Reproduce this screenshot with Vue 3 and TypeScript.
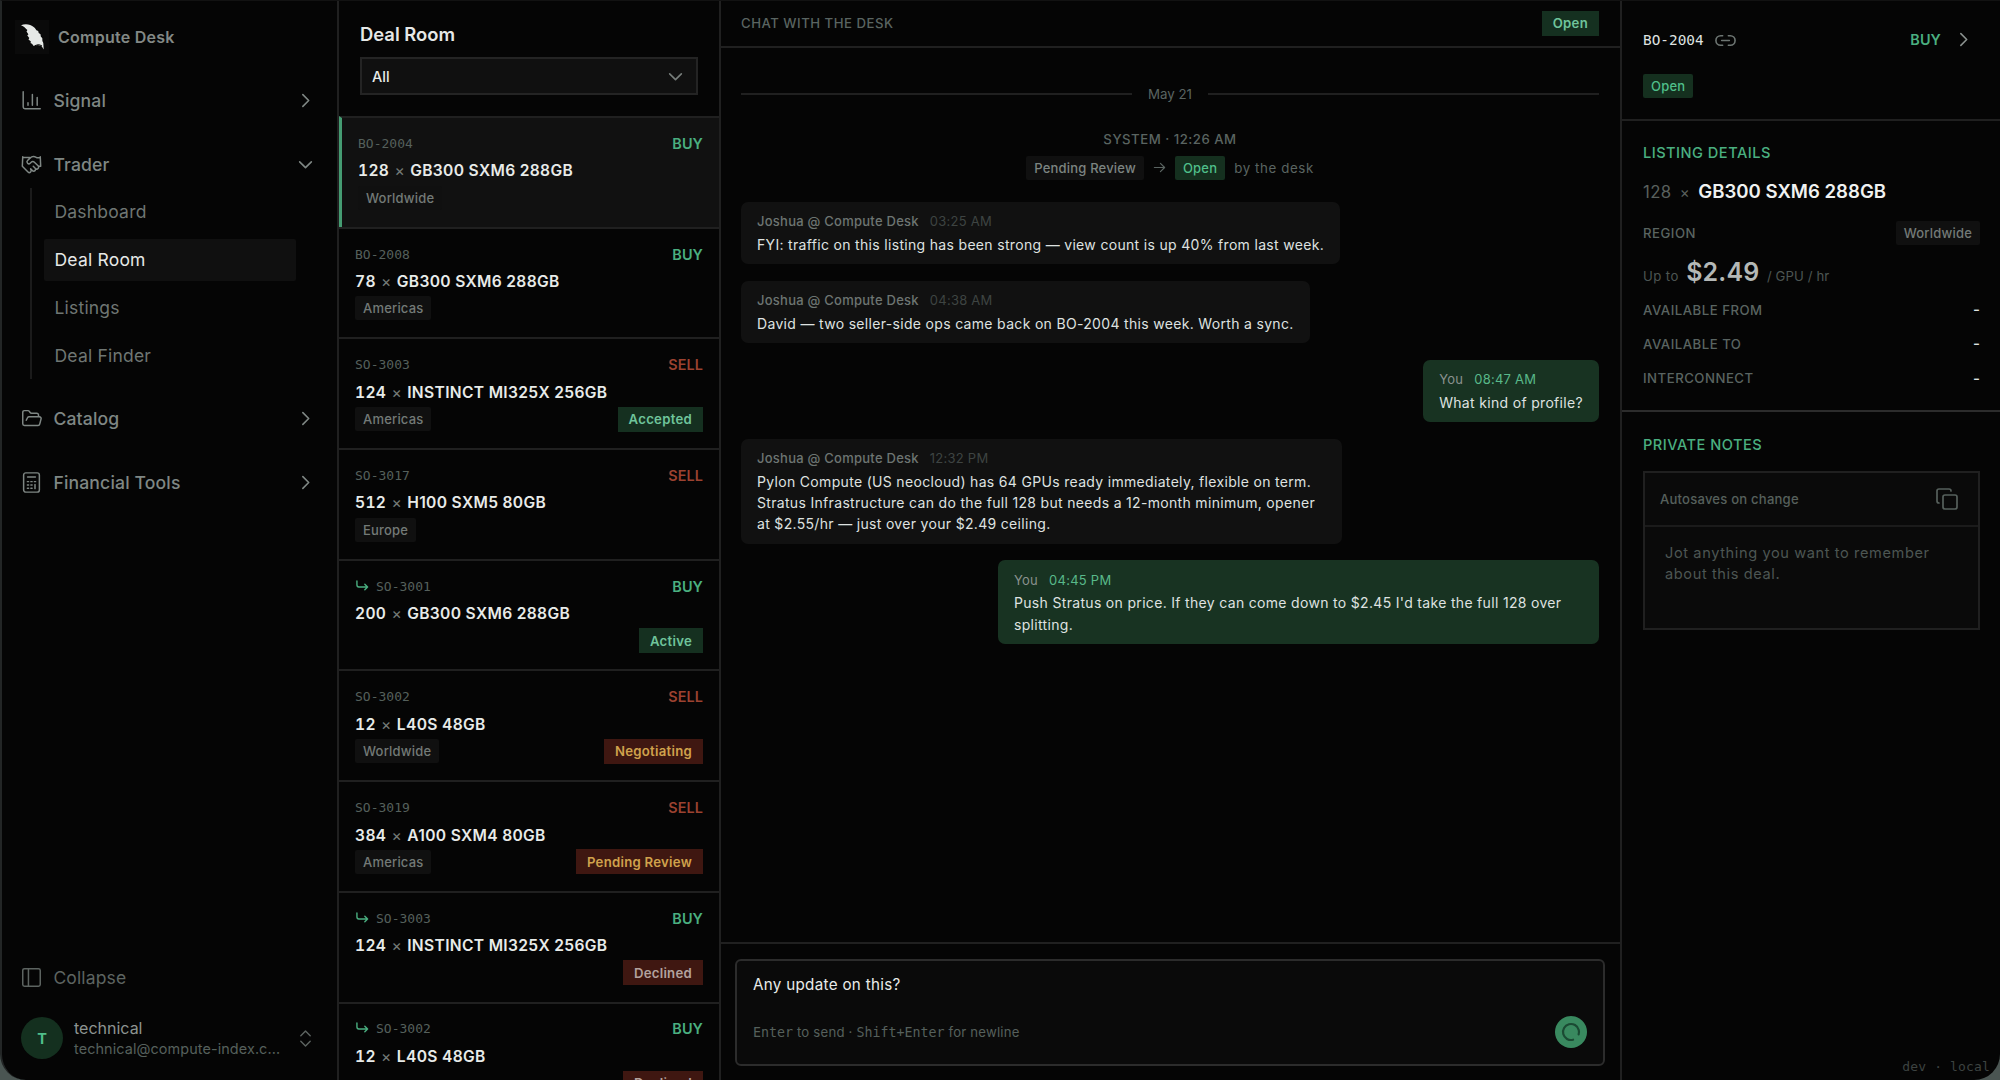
<script setup lang="ts">
interface Deal {
  id: string
  side: 'BUY' | 'SELL'
  qty: string
  name: string
  region?: string
  status?: string
  tone?: 'green' | 'amber' | 'red'
  child?: boolean
  active?: boolean
}

interface Message {
  own: boolean
  author: string
  time: string
  body: string
}

const subItems = ['Dashboard', 'Deal Room', 'Listings', 'Deal Finder']

const deals: Deal[] = [
  { id: 'BO-2004', side: 'BUY', qty: '128', name: 'GB300 SXM6 288GB', region: 'Worldwide', active: true },
  { id: 'BO-2008', side: 'BUY', qty: '78', name: 'GB300 SXM6 288GB', region: 'Americas' },
  { id: 'SO-3003', side: 'SELL', qty: '124', name: 'INSTINCT MI325X 256GB', region: 'Americas', status: 'Accepted', tone: 'green' },
  { id: 'SO-3017', side: 'SELL', qty: '512', name: 'H100 SXM5 80GB', region: 'Europe' },
  { id: 'SO-3001', side: 'BUY', qty: '200', name: 'GB300 SXM6 288GB', status: 'Active', tone: 'green', child: true },
  { id: 'SO-3002', side: 'SELL', qty: '12', name: 'L40S 48GB', region: 'Worldwide', status: 'Negotiating', tone: 'amber' },
  { id: 'SO-3019', side: 'SELL', qty: '384', name: 'A100 SXM4 80GB', region: 'Americas', status: 'Pending Review', tone: 'amber' },
  { id: 'SO-3003', side: 'BUY', qty: '124', name: 'INSTINCT MI325X 256GB', status: 'Declined', tone: 'red', child: true },
  { id: 'SO-3002', side: 'BUY', qty: '12', name: 'L40S 48GB', status: 'Declined', tone: 'red', child: true },
]

const messages: Message[] = [
  { own: false, author: 'Joshua @ Compute Desk', time: '03:25 AM', body: 'FYI: traffic on this listing has been strong — view count is up 40% from last week.' },
  { own: false, author: 'Joshua @ Compute Desk', time: '04:38 AM', body: 'David — two seller-side ops came back on BO-2004 this week. Worth a sync.' },
  { own: true, author: 'You', time: '08:47 AM', body: 'What kind of profile?' },
  { own: false, author: 'Joshua @ Compute Desk', time: '12:32 PM', body: 'Pylon Compute (US neocloud) has 64 GPUs ready immediately, flexible on term. Stratus Infrastructure can do the full 128 but needs a 12-month minimum, opener at $2.55/hr — just over your $2.49 ceiling.' },
  { own: true, author: 'You', time: '04:45 PM', body: "Push Stratus on price. If they can come down to $2.45 I'd take the full 128 over splitting." },
]

const terms = ['Available from', 'Available to', 'Interconnect']
</script>

<template>
  <div class="backdrop">
    <div class="app">
      <nav class="sidebar">
        <div class="brand">
          <span class="brand-mark">
            <svg width="34" height="34" viewBox="0 0 34 34">
              <path d="M6 5.200C10 3.400 15.500 4 19 7.200c1.200 1.100 1.800 1.800 2.400 3l1.800.8.500 2 1.800 1.300.3 2.300 1.500 1.600.1 2.800.9 2 .4 6.500-2-3.200-3.700-1.200-4.300 1-1.700-2.400-1.500-.8.400-1.500-2.400-1.900.8-1.400-2-2.500 1.100-1.300-1.900-2.700.9-1.600C11 8.600 9 6.400 6 5.200Z" fill="#e6e9e7" />
              <path d="M20 25.600l3.500-1 3 1" stroke="#0a0a0a" stroke-width="1" />
            </svg>
          </span>
          <span class="brand-name">Compute Desk</span>
        </div>

        <div class="group">
          <svg class="ico" viewBox="0 0 24 24"><path d="M2.500 2v17.500a2 2 0 0 0 2 2H22M8 14.500v3M13 5v12.500M18.500 8.500v9" /></svg>
          <span>Signal</span>
          <svg class="chev" viewBox="0 0 16 16"><path d="M5.500 2.500 11 8l-5.500 5.500" /></svg>
        </div>
        <div class="group">
          <svg class="ico" viewBox="0 0 24 24"><path d="m11 17 2 2a1 1 0 1 0 3-3M14 14l2.500 2.500a1 1 0 1 0 3-3l-3.880-3.880a3 3 0 0 0-4.240 0l-.88.880a1 1 0 1 1-3-3l2.810-2.810a5.790 5.790 0 0 1 7.060-.870l.470.280a2 2 0 0 0 1.420.250L22 4M22 3l.5 11h-2M2 3l-.5 11L8 20.500a1 1 0 1 0 3-3M2 4h8" /></svg>
          <span>Trader</span>
          <svg class="chev" viewBox="0 0 16 16"><path d="M2.500 5.500 8 11l5.500-5.500" /></svg>
        </div>
        <div class="sub">
          <div v-for="s in subItems" :key="s" class="sub-item" :class="{ on: s === 'Deal Room' }">{{ s }}</div>
        </div>
        <div class="group">
          <svg class="ico" viewBox="0 0 24 24"><path d="m6 14 1.450-2.900A2 2 0 0 1 9.240 10H21a2 2 0 0 1 1.940 2.500l-1.550 6A2 2 0 0 1 19.450 20H4a2 2 0 0 1-2-2V5c0-1.100.9-2 2-2h3.930a2 2 0 0 1 1.660.9l.820 1.200a2 2 0 0 0 1.660.9H18a2 2 0 0 1 2 2v2" /></svg>
          <span>Catalog</span>
          <svg class="chev" viewBox="0 0 16 16"><path d="M5.500 2.500 11 8l-5.500 5.500" /></svg>
        </div>
        <div class="group">
          <svg class="ico" viewBox="0 0 24 24"><rect x="3" y="1" width="18" height="22" rx="2.500" /><path d="M7.500 5.800h9M7.300 11h1.400M11.300 11h1.400M15.300 11h1.400M7.300 14.800h1.400M11.300 14.800h1.400M7.300 18.600h1.400M11.300 18.600h1.400M16 14.300v4.700" /></svg>
          <span>Financial Tools</span>
          <svg class="chev" viewBox="0 0 16 16"><path d="M5.500 2.500 11 8l-5.500 5.500" /></svg>
        </div>

        <div class="side-foot">
          <div class="collapse">
            <svg class="ico" viewBox="0 0 24 24"><rect x="2" y="2" width="20" height="20" rx="2" /><path d="M8.500 2v20" /></svg>
            <span>Collapse</span>
          </div>
          <div class="user">
            <span class="avatar">T</span>
            <div class="who">
              <div class="uname">technical</div>
              <div class="mail">technical@compute-index.c...</div>
            </div>
            <svg class="updown" viewBox="0 0 16 20"><path d="M3 7 8 2l5 5M3 13l5 5 5-5" /></svg>
          </div>
        </div>
      </nav>

      <section class="deals">
        <header class="deals-head">
          <h1>Deal Room</h1>
          <div class="select">
            <span>All</span>
            <svg class="chev" viewBox="0 0 16 16"><path d="M2.500 5.500 8 11l5.500-5.500" /></svg>
          </div>
        </header>
        <article v-for="(d, i) in deals" :key="i" class="deal" :class="{ active: d.active }">
          <div class="deal-top">
            <svg v-if="d.child" class="reply" viewBox="0 0 14 14"><path d="M1 1v4.500a2 2 0 0 0 2 2h9.500M9.500 4.500l3 3-3 3" /></svg>
            <span class="deal-id">{{ d.id }}</span>
            <span class="side" :class="d.side.toLowerCase()">{{ d.side }}</span>
          </div>
          <div class="deal-name"><span class="qty">{{ d.qty }}</span> <i>×</i> {{ d.name }}</div>
          <div class="deal-tags">
            <span v-if="d.region" class="tag">{{ d.region }}</span>
            <span v-if="d.status" class="badge" :class="d.tone">{{ d.status }}</span>
          </div>
        </article>
      </section>

      <main class="chat">
        <header class="chat-head">
          <span class="caps">Chat with the desk</span>
          <span class="badge green">Open</span>
        </header>
        <div class="thread">
          <div class="day"><span>May 21</span></div>
          <div class="system">
            <div class="caps sys-time">System · 12:26 AM</div>
            <div class="sys-line">
              <span class="tag strong">Pending Review</span>
              <svg class="arrow" viewBox="0 0 14 14"><path d="M1.500 7h11M8 2.500 12.500 7 8 11.500" /></svg>
              <span class="tag open">Open</span>
              <span class="by">by the desk</span>
            </div>
          </div>
          <div v-for="m in messages" :key="m.time" class="msg" :class="{ own: m.own }">
            <div class="meta"><b>{{ m.author }}</b><time>{{ m.time }}</time></div>
            <p>{{ m.body }}</p>
          </div>
        </div>
        <footer class="composer">
          <div class="box">
            <div class="draft">Any update on this?</div>
            <div class="hint">
              <span><kbd>Enter</kbd> to send · <kbd>Shift+Enter</kbd> for newline</span>
              <span class="send"><svg viewBox="0 0 32 32"><circle cx="16" cy="16" r="8" stroke="#1b4a33" stroke-width="2.200" stroke-dasharray="42 9" transform="rotate(75 16 16)" /></svg></span>
            </div>
          </div>
        </footer>
      </main>

      <aside class="panel">
        <header class="panel-head">
          <div class="panel-row">
            <span class="panel-id">BO-2004</span>
            <svg class="link" viewBox="0 0 24 24"><path d="M9 17H7A5 5 0 0 1 7 7h2M15 7h2a5 5 0 1 1 0 10h-2M8 12h8" /></svg>
            <span class="side buy">BUY</span>
            <svg class="chev" viewBox="0 0 16 16"><path d="M5.500 2.500 11 8l-5.500 5.500" /></svg>
          </div>
          <span class="tag open">Open</span>
        </header>
        <section class="details">
          <h2>Listing details</h2>
          <div class="gpu"><span class="q">128</span><span class="x">×</span><span>GB300 SXM6 288GB</span></div>
          <div class="kv region"><span class="caps">Region</span><span class="tag">Worldwide</span></div>
          <div class="price"><span>Up to</span><strong>$2.49</strong><span>/ GPU / hr</span></div>
          <div v-for="t in terms" :key="t" class="kv"><span class="caps">{{ t }}</span><b>-</b></div>
        </section>
        <section class="notes">
          <h2>Private notes</h2>
          <div class="note-box">
            <div class="note-head">
              <span>Autosaves on change</span>
              <svg viewBox="0 0 24 24"><rect x="8" y="8" width="14" height="14" rx="2" /><path d="M4 16c-1.100 0-2-.9-2-2V4c0-1.100.9-2 2-2h10c1.100 0 2 .9 2 2" /></svg>
            </div>
            <div class="note-body">Jot anything you want to remember about this deal.</div>
          </div>
        </section>
        <div class="env">dev · local</div>
      </aside>
    </div>
  </div>
</template>

<style>
body { background: #4a5552; }
</style>

<style scoped>
* { box-sizing: border-box; }
.backdrop { width: 2000px; height: 1080px; overflow: hidden; background: #4a5552; font-family: Inter, sans-serif; color: #e8ebe9; }
.app { width: 2000px; height: 1080px; display: flex; background: #050505; border-left: 2px solid #232626; border-top: 1px solid #121212; border-radius: 0 0 26px 26px; overflow: hidden; }
svg { fill: none; stroke: currentColor; stroke-linecap: round; stroke-linejoin: round; flex: none; }
h1, h2, p { margin: 0; font-weight: 600; }

.sidebar { width: 337px; flex: none; border-right: 2px solid #202020; display: flex; flex-direction: column; padding: 18px 0 0; color: #7c8481; }
.brand { display: flex; align-items: center; height: 36px; padding-left: 13px; gap: 9px; margin-bottom: 14px; }
.brand-mark { width: 34px; height: 34px; background: #0a0a0a; display: flex; }
.brand-mark svg { stroke: none; }
.brand-name { font-size: 16px; font-weight: 600; letter-spacing: .25px; color: #838986; }
.group { height: 63.600px; display: flex; align-items: center; padding: 0 23px 0 19px; font-size: 17.600px; font-weight: 500; color: #7f8784; letter-spacing: .15px; }
.group span { flex: 1; }
.ico { width: 21px; height: 21px; stroke-width: 1.700; margin-right: 11.400px; }
.chev { width: 17px; height: 17px; stroke-width: 1.500; }
.sub { margin: -8px 0 8px 28px; border-left: 2px solid #1b1b1b; padding-left: 12px; height: 190.500px; }
.sub-item { height: 47.600px; padding-left: 10.500px; display: flex; align-items: center; font-size: 17.500px; letter-spacing: .2px; color: #6f7673; width: 252px; }
.sub-item.on { background: #101010; color: #e6e8e7; height: 42px; margin: 3px 0; border-radius: 2px; }
.side-foot { margin-top: auto; }
.collapse { display: flex; align-items: center; padding-left: 19px; font-size: 17.500px; color: #5d6461; letter-spacing: .15px; height: 40px; }
.user { display: flex; align-items: center; height: 84px; padding: 0 24px 0 19px; margin-top: -1px; }
.avatar { width: 42px; height: 42px; border-radius: 50%; background: #14301f; color: #4fbf8a; font-weight: 700; font-size: 14.500px; display: flex; align-items: center; justify-content: center; }
.who { margin-left: 11px; flex: 1; padding-top: 1px; }
.uname { font-size: 16px; line-height: 20px; color: #8d9491; }
.mail { font-size: 14.400px; letter-spacing: .1px; line-height: 21px; color: #56605c; white-space: nowrap; }
.updown { width: 15px; height: 19px; stroke-width: 1.500; color: #5d6461; }

.deals { width: 382px; flex: none; border-right: 2px solid #202020; }
.deals-head { height: 115px; padding: 20px 21px 0 21px; }
h1 { font-size: 18.400px; line-height: 26px; color: #e6e8e7; }
.select { margin-top: 10px; height: 38px; border: 2px solid #242424; background: #101010; display: flex; align-items: center; justify-content: space-between; padding: 0 12px 0 10px; font-size: 14.500px; font-weight: 500; }
.select .chev { color: #777e7b; }
.deal { height: 110.700px; border-top: 2px solid #202020; padding: 14.400px 16px 0; }
.deal.active { background: #111; border-left: 3px solid #459c72; }
.deal-top { height: 22px; display: flex; align-items: center; }
.deal-id { font: 13px "DejaVu Sans Mono", monospace; color: #55605c; flex: 1; }
.reply { width: 13px; height: 13px; stroke-width: 1.500; color: #4aaf80; margin: 0 7px 0 1px; }
.side { font-size: 14.400px; font-weight: 600; letter-spacing: .1px; }
.buy { color: #4aaf80; }
.sell { color: #9c4230; }
.deal-name { height: 30.900px; line-height: 33px; font-size: 15.600px; font-weight: 600; letter-spacing: .33px; white-space: nowrap; color: #e8ebe9; }
.qty { font-variant-numeric: tabular-nums; }
.deal-name i { font-style: normal; font-weight: 400; color: #747b78; margin: 0 .9px; }
.deal-tags { display: flex; justify-content: space-between; align-items: center; height: 25px; }
.tag { height: 24px; padding: 0 8px; display: inline-flex; align-items: center; font-size: 13px; font-weight: 500; letter-spacing: .2px; color: #737a77; background: #101010; border-radius: 2px; }
.tag.open { background: #15301f; color: #4fbf8a; }
.badge { margin-left: auto; height: 25px; padding: 0 11px; display: inline-flex; align-items: center; font-size: 13.200px; font-weight: 600; letter-spacing: .26px; }
.green { background: #153020; color: #6fc49b; }
.amber { background: #3f1711; color: #d0a24c; }
.red { background: #3f1711; color: #b3a29e; }

.chat { width: 901px; flex: none; border-right: 2px solid #202020; display: flex; flex-direction: column; }
.caps { text-transform: uppercase; font-size: 13.200px; font-weight: 500; letter-spacing: .5px; color: #5a6461; }
.chat-head { height: 47px; border-bottom: 2px solid #202020; display: flex; align-items: center; padding: 0 21px 1px 20px; }
.thread { flex: 1; padding: 37px 21px 0 20px; display: flex; flex-direction: column; }
.day { display: flex; align-items: center; gap: 16px; font-size: 13.300px; color: #5a6461; height: 18px; }
.day::before, .day::after { content: ""; flex: 1; height: 2px; background: #202020; }
.system { display: flex; flex-direction: column; align-items: center; margin: 27px 0 21.700px; }
.sys-time { line-height: 18px; height: 25px; }
.sys-line { display: flex; align-items: center; height: 25px; font-size: 13.300px; }
.strong { color: #7c8481; }
.arrow { width: 13px; height: 13px; margin: 0 9px; stroke-width: 1.300; color: #5a6461; }
.by { margin-left: 9px; color: #5a6461; letter-spacing: .6px; }
.msg { align-self: flex-start; max-width: 601px; background: #111; border-radius: 7px; padding: 9.500px 16px 9.400px; margin-bottom: 16.500px; }
.own { align-self: flex-end; background: #183322; }
.meta { line-height: 20px; font-size: 13px; letter-spacing: .25px; color: #3e4442; }
.meta b { font-weight: 500; color: #6d7572; margin-right: 11px; }
.own .meta b { font-weight: 400; color: #8a918e; }
.own .meta { color: #58b98a; }
.msg p { margin-top: 2.500px; font-size: 14px; line-height: 21.200px; font-weight: 400; letter-spacing: .32px; color: #dfe2e0; }
.composer { height: 138px; border-top: 2px solid #202020; padding: 15px 15px 0 14px; }
.box { height: 107px; border: 2px solid #2c2c2c; border-radius: 6px; background: #0a0a0a; padding: 13px 16px 0; }
.draft { font-size: 15.200px; letter-spacing: .3px; line-height: 22px; height: 41px; }
.hint { display: flex; align-items: center; justify-content: space-between; font-size: 13.200px; letter-spacing: .2px; color: #56605c; height: 34px; }
kbd { font: 13.300px "DejaVu Sans Mono", monospace; letter-spacing: 0; }
.send { width: 32px; height: 32px; border-radius: 50%; background: #39895f; display: flex; }
.send svg { width: 32px; height: 32px; }

.panel { flex: 1; display: flex; flex-direction: column; }
.panel-head { height: 120px; border-bottom: 2px solid #202020; padding: 27px 21px 0; }
.panel-row { display: flex; align-items: center; height: 24px; margin-bottom: 22px; }
.panel-id { font: 14.400px "DejaVu Sans Mono", monospace; color: #dfe2e0; }
.link { width: 23px; height: 23px; margin-left: 10px; stroke-width: 1.700; color: #6d7572; }
.panel-row .side { margin-left: auto; margin-top: -1px; }
.panel-row .chev { margin: -1px 7px 0 14px; color: #8a918e; }
.details { height: 291px; border-bottom: 2px solid #2c2c2c; padding: 22px 20px 0 21px; }
h2 { font-size: 14.600px; font-weight: 500; letter-spacing: .48px; line-height: 20px; color: #4aaf80; text-transform: uppercase; }
.gpu { display: flex; align-items: baseline; margin-top: 15px; line-height: 26px; font-size: 18.600px; font-weight: 600; color: #f0f2f1; }
.gpu .q { font-size: 16.800px; font-weight: 400; letter-spacing: .3px; color: #59605d; }
.gpu .x { font-weight: 400; font-size: 15px; color: #59605d; margin: 0 8.500px; }
.kv { display: flex; justify-content: space-between; align-items: center; height: 34.400px; }
.kv b { font-weight: 500; font-size: 15px; color: #dfe2e0; }
.region { margin-top: 10px; }
.price { display: flex; align-items: baseline; font-size: 13.200px; letter-spacing: .1px; color: #4d5653; height: 41px; line-height: 43px; margin-top: 1px; }
.price span:first-child { letter-spacing: .4px; }
.price strong { font-size: 25px; font-weight: 600; letter-spacing: .15px; color: #b4b8b6; margin: 0 7.500px; }
.notes { padding: 23px 20px 0 21px; }
.note-box { margin-top: 16px; height: 158.500px; border: 2px solid #202020; background: #0a0a0a; }
.note-head { height: 54px; border-bottom: 2px solid #1b1b1b; display: flex; align-items: center; justify-content: space-between; padding: 0 19px 0 15px; font-size: 13.100px; font-weight: 500; color: #56605c; letter-spacing: .2px; }
.note-head svg { width: 24px; height: 24px; stroke-width: 1.700; }
.note-body { padding: 16px 20px; font-size: 14.600px; line-height: 21.300px; color: #4d5653; letter-spacing: .6px; }
.env { margin-top: auto; align-self: flex-end; font: 13px "DejaVu Sans Mono", monospace; letter-spacing: .15px; color: #3d4341; padding: 0 10px 6px 0; }
</style>
